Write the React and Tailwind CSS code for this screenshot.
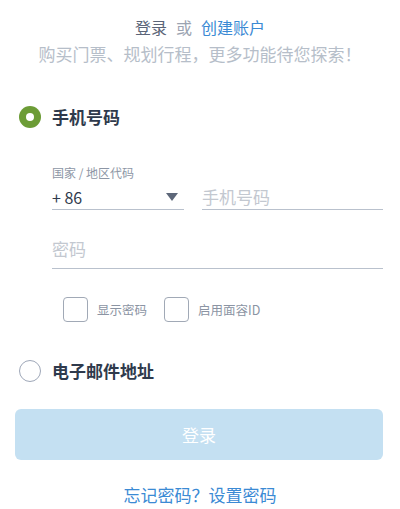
// login panel: phone / email toggle

const font = { fontFamily: '"Noto Sans CJK SC", "Noto Sans", sans-serif' };

function Radio({ checked }) {
  if (checked) {
    return (
      <span className="flex items-center justify-center w-[22px] h-[22px] rounded-full bg-[#6c9c36]">
        <span className="w-[8px] h-[8px] rounded-full bg-white" />
      </span>
    );
  }
  return <span className="w-[22px] h-[22px] rounded-full border-[1.5px] border-[#9ea7b8] bg-white" />;
}

function Checkbox({ label }) {
  return (
    <div className="flex items-center">
      <span className="w-[25px] h-[25px] rounded-[4px] border-[1.5px] border-[#a1a9b6]" />
      <span className="ml-[9px] text-[12.5px] leading-[16px] text-[#8b94a3]">{label}</span>
    </div>
  );
}

export default function App() {
  return (
    <div className="w-[400px] h-[509px] bg-white flex flex-col overflow-hidden" style={font}>
      {/* Header */}
      <div className="pt-[17px] text-center">
        <p className="text-[16px] leading-[20px]">
          <span className="text-[#5b6578]">登录</span>
          <span className="text-[#9ba3b1] mx-[9px]">或</span>
          <span className="text-[#3b8ad4]">创建账户</span>
        </p>
        <p className="mt-[6px] text-[17px] leading-[22px] text-[#b6bec9]">购买门票、规划行程，更多功能待您探索！</p>
      </div>

      {/* Phone option */}
      <div className="mt-[40px] h-[24px] flex items-center pl-[19px]">
        <Radio checked />
        <span className="ml-[11px] text-[17px] font-bold text-[#2f3a4c]">手机号码</span>
      </div>

      <div className="pl-[52px] pr-[17px]">
        <p className="mt-[36px] text-[12px] leading-[16px] text-[#8d96a5]">国家 / 地区代码</p>
        <div className="mt-[4px] flex gap-[18px]">
          <div className="w-[132px] h-[25px] flex items-center justify-between border-b border-[#b9c1cd]">
            <span className="text-[16px] leading-[24px] text-[#2f3a4c]">+ 86</span>
            <svg width="12" height="8" viewBox="0 0 12 8" className="mr-[6px]">
              <path d="M0 0h12L6 8z" fill="#5d6779" />
            </svg>
          </div>
          <div className="flex-1 h-[25px] flex items-center border-b border-[#b9c1cd]">
            <span className="text-[17px] leading-[24px] text-[#c3c8d0]">手机号码</span>
          </div>
        </div>

        <div className="mt-[27px] pb-[7px] border-b border-[#b9c1cd]">
          <span className="block text-[17px] leading-[24px] text-[#c3c8d0]">密码</span>
        </div>

        <div className="mt-[28px] ml-[11px] flex gap-[17px]">
          <Checkbox label="显示密码" />
          <Checkbox label="启用面容ID" />
        </div>
      </div>

      {/* Email option */}
      <div className="mt-[37px] h-[24px] flex items-center pl-[19px]">
        <Radio />
        <span className="ml-[11px] text-[17px] font-bold text-[#2f3a4c]">电子邮件地址</span>
      </div>

      <div className="mt-[26px] ml-[15px] mr-[17px] h-[51px] rounded-[6px] bg-[#c4e0f2] flex items-center justify-center">
        <span className="text-[17px] text-white">登录</span>
      </div>

      <p className="mt-[25px] text-center text-[17px] leading-[20px] text-[#3b8ad4]">忘记密码？设置密码</p>
    </div>
  );
}
